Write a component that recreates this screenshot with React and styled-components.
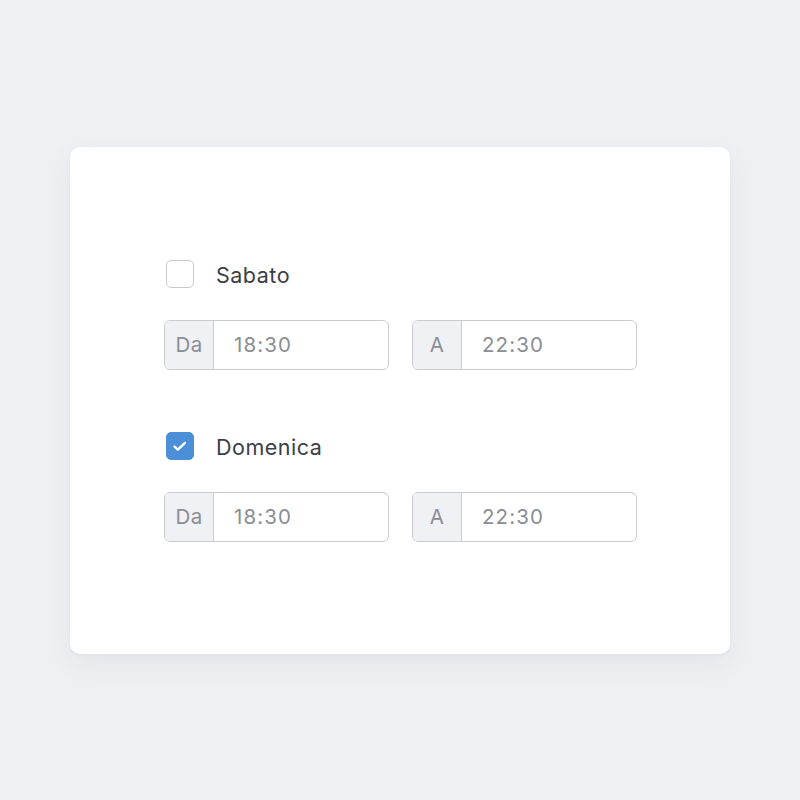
import React from 'react';
import styled, { createGlobalStyle } from 'styled-components';

const GlobalStyle = createGlobalStyle`
  html, body {
    margin: 0;
    padding: 0;
    background: #eff0f4;
    font-family: Inter, "Noto Sans", sans-serif;
  }
`;

const Page = styled.div`
  min-height: 800px;
  display: flex;
  align-items: center;
  justify-content: center;
`;

const Card = styled.div`
  width: 660px;
  box-sizing: border-box;
  padding: 113px 93px 112px 94px;
  background: #fff;
  border-radius: 10px;
  box-shadow: 0 10px 30px rgba(40, 45, 70, 0.06), 0 1px 3px rgba(40, 45, 70, 0.04);
  display: flex;
  flex-direction: column;
  gap: 62px;
`;

const Day = styled.div`
  display: flex;
  flex-direction: column;
  gap: 32px;
`;

const CheckRow = styled.label`
  display: flex;
  align-items: center;
  gap: 22px;
  padding-left: 2px;
  height: 28px;
  font-size: 21.5px;
  color: #3c3e46;
  letter-spacing: 0.5px;
  line-height: 28px;
`;

const Text = styled.span`
  padding-top: 3px;
`;

const Box = styled.span`
  width: 28px;
  height: 28px;
  box-sizing: border-box;
  border-radius: 5px;
  border: 1px solid ${(p) => (p.checked ? '#4a8fd8' : '#c9cbd1')};
  background: ${(p) => (p.checked ? '#4a8fd8' : '#fff')};
  display: flex;
  align-items: center;
  justify-content: center;
`;

const Inputs = styled.div`
  display: flex;
  gap: 23px;
`;

const Group = styled.div`
  width: 225px;
  height: 50px;
  box-sizing: border-box;
  border: 1px solid #c9cbd1;
  border-radius: 6px;
  display: flex;
  overflow: hidden;
  font-size: 20.5px;
  color: #8b8d94;
  line-height: 1;
`;

const Addon = styled.div`
  width: 48px;
  flex-shrink: 0;
  background: #f0f1f5;
  border-right: 1px solid #c9cbd1;
  display: flex;
  align-items: center;
  justify-content: center;
  padding-top: 2px;
  letter-spacing: 0.3px;
`;

const Value = styled.div`
  flex: 1;
  display: flex;
  align-items: center;
  padding: 2px 0 0 20px;
  letter-spacing: 1.1px;
`;

function Check({ checked }) {
  return (
    <Box checked={checked}>
      {checked && (
        <svg width="16" height="16" viewBox="0 0 16 16" fill="none">
          <path d="M2.5 8.6l3.3 3L13 4.8" stroke="#fff" strokeWidth="2.4" strokeLinecap="round" strokeLinejoin="round" />
        </svg>
      )}
    </Box>
  );
}

function TimeInput({ label, value }) {
  return (
    <Group>
      <Addon>{label}</Addon>
      <Value>{value}</Value>
    </Group>
  );
}

const days = [
  { name: 'Sabato', checked: false },
  { name: 'Domenica', checked: true },
];

export default function App() {
  return (
    <>
      <GlobalStyle />
      <Page>
        <Card>
          {days.map((d) => (
            <Day key={d.name}>
              <CheckRow>
                <Check checked={d.checked} />
                <Text>{d.name}</Text>
              </CheckRow>
              <Inputs>
                <TimeInput label="Da" value="18:30" />
                <TimeInput label="A" value="22:30" />
              </Inputs>
            </Day>
          ))}
        </Card>
      </Page>
    </>
  );
}
